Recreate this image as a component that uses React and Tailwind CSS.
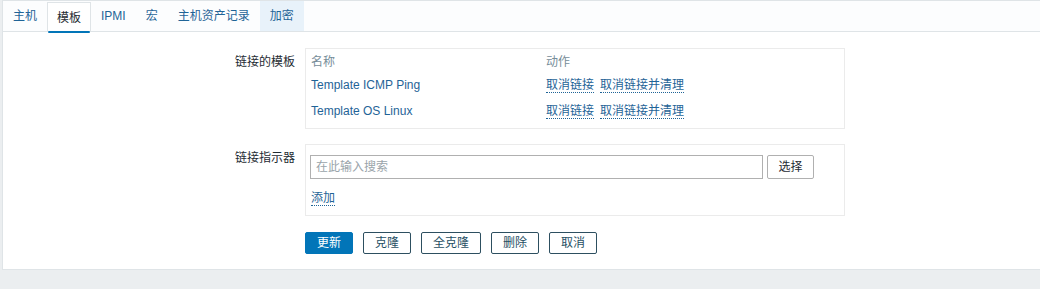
const tabs = ["主机", "模板", "IPMI", "宏", "主机资产记录", "加密"];

const templates = ["Template ICMP Ping", "Template OS Linux"];

function DotLink({ children }) {
  return (
    <span className="text-[#1f6497] border-b border-dotted border-[#1f6497] leading-[14px] cursor-pointer">
      {children}
    </span>
  );
}

export default function App() {
  return (
    <div className="h-[289px] bg-[#ebeef0] text-[12px] text-[#1f2c33] font-['Liberation_Sans','Noto_Sans_CJK_SC',sans-serif]">
      <div className="ml-[2px] bg-white border-l border-b border-[#dfe4e7] h-[270px] border-t">
        <div className="flex h-[31px] border-b border-[#dfe4e7] bg-[#fcfdfe]">
          {tabs.map((t, i) => (
            <div
              key={t}
              className={
                i === 1
                  ? "relative flex items-center px-[9px] mt-[1px] h-[30px] bg-white border border-b-0 border-[#dfe4e7] text-[#1f2c33]"
                  : i === 5
                  ? "flex items-center px-[10px] h-[30px] bg-[#e8f2fa] text-[#1f6497]"
                  : "flex items-center px-[10px] h-[30px] text-[#1f6497]"
              }
            >
              {t}
              {i === 1 && (
                <div className="absolute left-0 right-0 bottom-[-1px] h-[2px] rounded-sm bg-[#0275b8]" />
              )}
            </div>
          ))}
        </div>

        <div className="pt-[16px] flex flex-col gap-[15px]">
          <div className="flex">
            <div className="w-[292px] text-right pt-[5px]">链接的模板</div>
            <div className="ml-[10px] w-[540px] h-[81px] border border-[#ebebeb] px-[5px] pt-[3px]">
              <div className="flex h-[20px] items-center text-[#768d99]">
                <div className="w-[235px]">名称</div>
                <div>动作</div>
              </div>
              {templates.map((t) => (
                <div key={t} className="flex h-[26px] items-center">
                  <div className="w-[235px] text-[#1f6497]">{t}</div>
                  <div className="flex gap-[6px]">
                    <DotLink>取消链接</DotLink>
                    <DotLink>取消链接并清理</DotLink>
                  </div>
                </div>
              ))}
            </div>
          </div>

          <div className="flex">
            <div className="w-[292px] text-right pt-[5px]">链接指示器</div>
            <div className="ml-[10px] w-[540px] h-[72px] border border-[#ebebeb] px-[4px] pt-[10px]">
              <div className="flex gap-[4px]">
                <div className="w-[453px] h-[24px] border border-[#b0b0b0] flex items-center px-[5px] text-[#9aa4aa]">
                  在此输入搜索
                </div>
                <div className="w-[47px] h-[24px] border border-[#b0b0b0] rounded-[2px] flex items-center justify-center">
                  选择
                </div>
              </div>
              <div className="mt-[10px] pl-[1px]">
                <DotLink>添加</DotLink>
              </div>
            </div>
          </div>

          <div className="flex pl-[302px] pt-[1px] gap-[10px]">
            <button className="w-[48px] h-[22px] bg-[#0275b8] text-white rounded-[2px] border border-[#0275b8]">
              更新
            </button>
            <button className="w-[48px] h-[22px] border border-[#2d4f60] rounded-[2px] text-[#1f4f64]">
              克隆
            </button>
            <button className="w-[60px] h-[22px] border border-[#2d4f60] rounded-[2px] text-[#1f4f64]">
              全克隆
            </button>
            <button className="w-[48px] h-[22px] border border-[#2d4f60] rounded-[2px] text-[#1f4f64]">
              删除
            </button>
            <button className="w-[48px] h-[22px] border border-[#2d4f60] rounded-[2px] text-[#1f4f64]">
              取消
            </button>
          </div>
        </div>
      </div>
    </div>
  );
}
